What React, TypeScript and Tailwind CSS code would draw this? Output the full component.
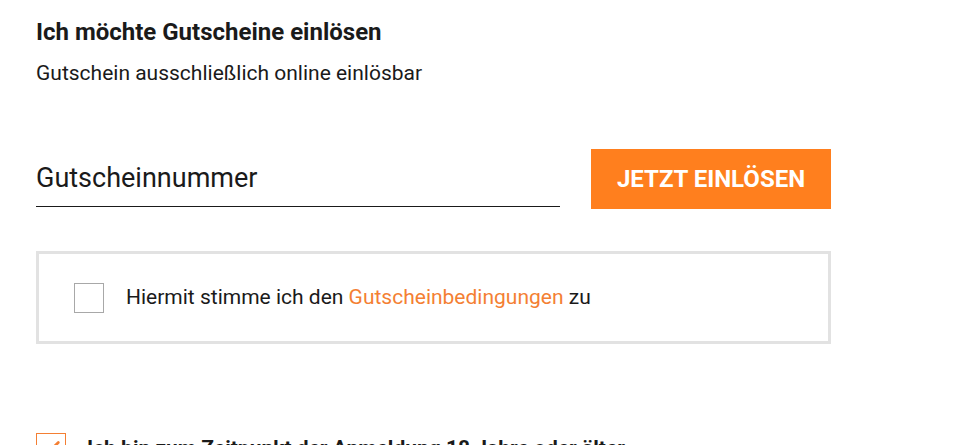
import { Check } from 'lucide-react'

export default function App() {
  return (
    <div className="min-h-[445px] w-[964px] overflow-hidden bg-white font-['Roboto',sans-serif] text-[#1a1a1a]">
      <div className="pl-[36px] pt-[16px]">
        <h2 className="text-[24px] font-bold leading-[32px]">Ich möchte Gutscheine einlösen</h2>
        <p className="mt-[11px] text-[21px] leading-[28px]">Gutschein ausschließlich online einlösbar</p>

        <div className="mt-[62px] flex items-end gap-[31px]">
          <div className="w-[524px] border-b border-[#1a1a1a] pb-[10px]">
            <input
              type="text"
              placeholder="Gutscheinnummer"
              className="h-[36px] w-full bg-transparent text-[27px] leading-[36px] outline-none placeholder:text-[#1a1a1a]"
            />
          </div>
          <button className="mb-[-2px] h-[60px] w-[240px] bg-[#ff7f1e] text-[24px] font-bold text-white">
            JETZT EINLÖSEN
          </button>
        </div>

        <div className="mt-[44px] flex h-[93px] w-[795px] items-center gap-[22px] border-[3px] border-[#e2e2e2] pl-[35px]">
          <span className="h-[30px] w-[30px] border border-[#a8a8a8]" />
          <span className="text-[21px]">
            Hiermit stimme ich den <span className="text-[#f47f33]">Gutscheinbedingungen</span> zu
          </span>
        </div>

        <div className="mt-[89px] flex items-start gap-[21px]">
          <span className="flex h-[30px] w-[30px] items-center justify-center border border-[#f47f33]">
            <Check size={22} className="text-[#f47f33]" strokeWidth={3} />
          </span>
          <span className="mt-[3px] text-[21px] font-bold leading-[24px]">
            Ich bin zum Zeitpunkt der Anmeldung 18 Jahre oder älter
          </span>
        </div>
      </div>
    </div>
  )
}
